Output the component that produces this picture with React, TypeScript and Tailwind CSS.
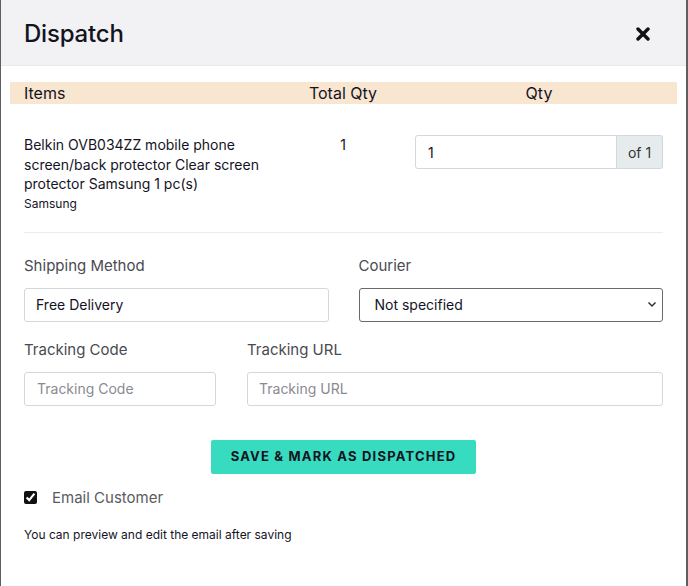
import React from "react";

const font = { fontFamily: "Inter, 'Noto Sans', sans-serif" };

export default function App() {
  const [email, setEmail] = React.useState(true);
  const [qty, setQty] = React.useState("1");

  return (
    <div className="min-h-[586px] bg-[#5f5f5f] pl-px pr-[2px]" style={font}>
      <div className="min-h-[586px] bg-white text-[#14141f]">
        {/* Header */}
        <div className="flex h-[66px] items-center justify-between border-b border-[#e6ebeb] bg-[#f2f2f4] pl-[23px] pr-[36px] pt-[3px]">
          <h2 className="text-[24px] font-medium tracking-[-0.2px]">Dispatch</h2>
          <button type="button" aria-label="Close" className="text-[#111]">
            <svg width="14" height="14" viewBox="0 0 14 14" aria-hidden>
              <path d="M2 2 L12 12 M12 2 L2 12" stroke="currentColor" strokeWidth="3.4" strokeLinecap="round" />
            </svg>
          </button>
        </div>

        <div className="px-[9px] pt-4">
          {/* Table */}
          <table className="w-full table-fixed border-collapse text-[#14141f]">
            <colgroup>
              <col className="w-[275px]" />
              <col className="w-[116px]" />
              <col />
            </colgroup>
            <thead>
              <tr className="bg-[#f9e6d1] text-[16px] leading-[22px]">
                <th className="px-[14px] text-left font-normal">Items</th>
                <th className="text-center font-normal">Total Qty</th>
                <th className="text-center font-normal">Qty</th>
              </tr>
            </thead>
            <tbody>
              <tr className="align-top">
                <td className="px-[14px] pb-[20px] pt-[31px] text-[14px] leading-[19.5px]">
                  Belkin OVB034ZZ mobile phone screen/back protector Clear screen protector Samsung 1 pc(s)
                  <div className="mt-[2px] text-[12px] leading-[16px]">Samsung</div>
                </td>
                <td className="pt-[31px] text-center text-[14px] leading-[19.5px]">1</td>
                <td className="px-[14px] pt-[31px]">
                  <div className="flex h-[34px] text-[14px]">
                    <input
                      value={qty}
                      onChange={(e) => setQty(e.target.value)}
                      className="h-full min-w-0 flex-1 rounded-l-[3px] border border-[#d4d8dc] px-[12px] text-[#14141f] outline-none"
                    />
                    <span className="flex w-[46px] items-center justify-center rounded-r-[3px] border border-l-0 border-[#d4d8dc] bg-[#e6ebed] text-[#333]">
                      of 1
                    </span>
                  </div>
                </td>
              </tr>
            </tbody>
          </table>
        </div>

        <div className="mx-[23px] border-t border-[#ececec]" />

        {/* Form */}
        <div className="px-[23px] pt-[22px] text-[15px] text-[#4a4a52]">
          <div className="grid grid-cols-2 gap-x-[30px]">
            <div>
              <label className="block leading-[22px]">Shipping Method</label>
              <input
                defaultValue="Free Delivery"
                className="mt-[11px] h-[34px] w-full rounded-[3px] border border-[#d4d8dc] px-[11px] text-[14px] text-[#14141f] outline-none"
              />
            </div>
            <div>
              <label className="block leading-[22px]">Courier</label>
              <div className="relative mt-[11px]">
                <select className="h-[34px] w-full appearance-none rounded-[3px] border border-[#6a6a6a] bg-white px-[15px] text-[14px] text-[#14141f] outline-none">
                  <option>Not specified</option>
                </select>
                <svg className="pointer-events-none absolute right-[6px] top-[13px]" width="10" height="7" viewBox="0 0 10 7" aria-hidden>
                  <path d="M1.5 1.5 L5 5 L8.5 1.5" fill="none" stroke="#333" strokeWidth="1.5" />
                </svg>
              </div>
            </div>
          </div>

          <div className="mt-[17px] grid grid-cols-[192px_1fr] gap-x-[31px]">
            <div>
              <label className="block leading-[22px]">Tracking Code</label>
              <input
                placeholder="Tracking Code"
                className="mt-[11px] h-[34px] w-full rounded-[3px] border border-[#d4d8dc] px-[12px] text-[14px] text-[#14141f] outline-none placeholder:text-[#8a8a92]"
              />
            </div>
            <div>
              <label className="block leading-[22px]">Tracking URL</label>
              <input
                placeholder="Tracking URL"
                className="mt-[11px] h-[34px] w-full rounded-[3px] border border-[#d4d8dc] px-[11px] text-[14px] text-[#14141f] outline-none placeholder:text-[#8a8a92]"
              />
            </div>
          </div>

          <div className="mt-[34px] flex justify-center">
            <button
              type="button"
              className="h-[34px] w-[265px] rounded-[2px] bg-[#37dbc0] text-[13px] font-bold tracking-[1.2px] text-[#14141f]"
            >
              SAVE &amp; MARK AS DISPATCHED
            </button>
          </div>

          <label className="mt-[13px] flex items-center gap-[15px]">
            <input
              type="checkbox"
              checked={email}
              onChange={(e) => setEmail(e.target.checked)}
              className="h-[13px] w-[13px] accent-[#111]"
            />
            <span className="text-[15px] leading-[22px] text-[#5a5a62]">Email Customer</span>
          </label>

          <p className="mt-[18px] text-[12px] leading-[16px] text-[#14141f]">You can preview and edit the email after saving</p>
        </div>
      </div>
    </div>
  );
}
